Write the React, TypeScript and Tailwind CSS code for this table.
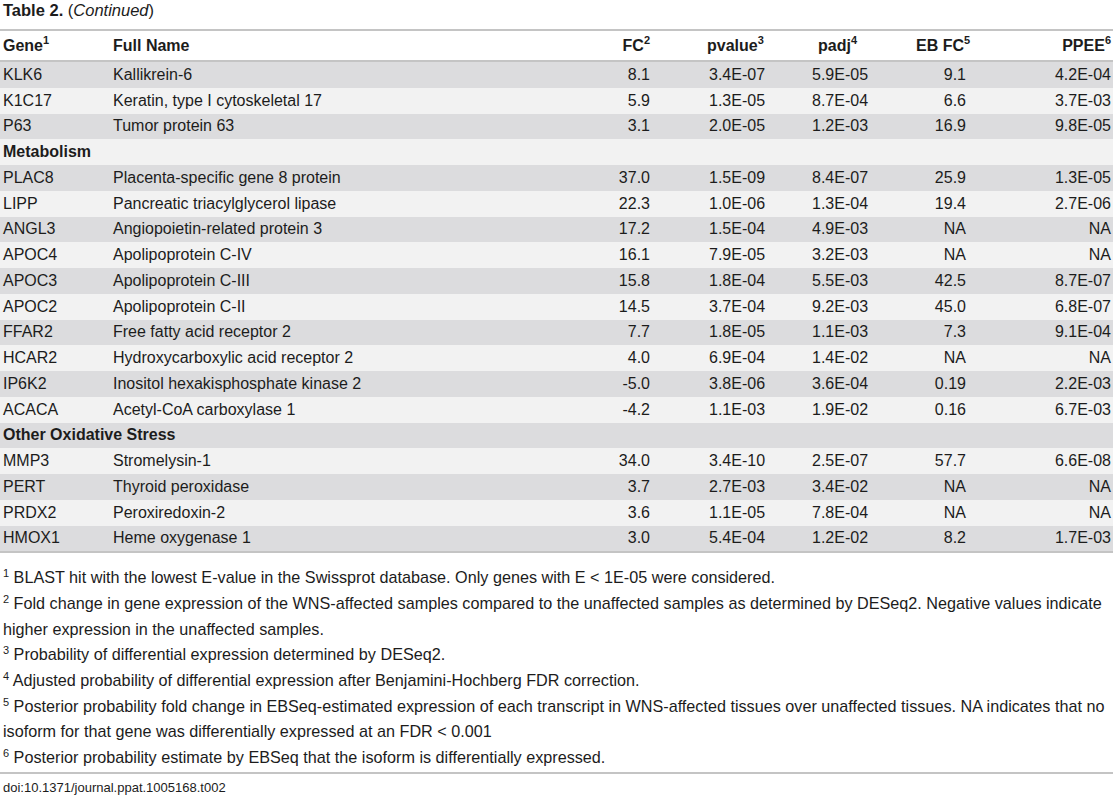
import React from "react";

type Row = { g?: string; n?: string; fc?: string; p?: string; pa?: string; eb?: string; pp?: string; section?: string };

const rows: Row[] = [
  { g: "KLK6", n: "Kallikrein-6", fc: "8.1", p: "3.4E-07", pa: "5.9E-05", eb: "9.1", pp: "4.2E-04" },
  { g: "K1C17", n: "Keratin, type I cytoskeletal 17", fc: "5.9", p: "1.3E-05", pa: "8.7E-04", eb: "6.6", pp: "3.7E-03" },
  { g: "P63", n: "Tumor protein 63", fc: "3.1", p: "2.0E-05", pa: "1.2E-03", eb: "16.9", pp: "9.8E-05" },
  { section: "Metabolism" },
  { g: "PLAC8", n: "Placenta-specific gene 8 protein", fc: "37.0", p: "1.5E-09", pa: "8.4E-07", eb: "25.9", pp: "1.3E-05" },
  { g: "LIPP", n: "Pancreatic triacylglycerol lipase", fc: "22.3", p: "1.0E-06", pa: "1.3E-04", eb: "19.4", pp: "2.7E-06" },
  { g: "ANGL3", n: "Angiopoietin-related protein 3", fc: "17.2", p: "1.5E-04", pa: "4.9E-03", eb: "NA", pp: "NA" },
  { g: "APOC4", n: "Apolipoprotein C-IV", fc: "16.1", p: "7.9E-05", pa: "3.2E-03", eb: "NA", pp: "NA" },
  { g: "APOC3", n: "Apolipoprotein C-III", fc: "15.8", p: "1.8E-04", pa: "5.5E-03", eb: "42.5", pp: "8.7E-07" },
  { g: "APOC2", n: "Apolipoprotein C-II", fc: "14.5", p: "3.7E-04", pa: "9.2E-03", eb: "45.0", pp: "6.8E-07" },
  { g: "FFAR2", n: "Free fatty acid receptor 2", fc: "7.7", p: "1.8E-05", pa: "1.1E-03", eb: "7.3", pp: "9.1E-04" },
  { g: "HCAR2", n: "Hydroxycarboxylic acid receptor 2", fc: "4.0", p: "6.9E-04", pa: "1.4E-02", eb: "NA", pp: "NA" },
  { g: "IP6K2", n: "Inositol hexakisphosphate kinase 2", fc: "-5.0", p: "3.8E-06", pa: "3.6E-04", eb: "0.19", pp: "2.2E-03" },
  { g: "ACACA", n: "Acetyl-CoA carboxylase 1", fc: "-4.2", p: "1.1E-03", pa: "1.9E-02", eb: "0.16", pp: "6.7E-03" },
  { section: "Other Oxidative Stress" },
  { g: "MMP3", n: "Stromelysin-1", fc: "34.0", p: "3.4E-10", pa: "2.5E-07", eb: "57.7", pp: "6.6E-08" },
  { g: "PERT", n: "Thyroid peroxidase", fc: "3.7", p: "2.7E-03", pa: "3.4E-02", eb: "NA", pp: "NA" },
  { g: "PRDX2", n: "Peroxiredoxin-2", fc: "3.6", p: "1.1E-05", pa: "7.8E-04", eb: "NA", pp: "NA" },
  { g: "HMOX1", n: "Heme oxygenase 1", fc: "3.0", p: "5.4E-04", pa: "1.2E-02", eb: "8.2", pp: "1.7E-03" },
];

const Sup = ({ children }: { children: React.ReactNode }) => (
  <sup className="text-[11px] top-[-0.55em]">{children}</sup>
);

export default function App() {
  return (
    <div
      className="w-[1113px] h-[800px] bg-white text-[#1c1c1c] overflow-hidden"
      style={{ fontFamily: '"Liberation Sans", Arial, sans-serif' }}
    >
      <div className="h-[29px] pl-[3px] text-[16.5px] leading-[20px]">
        <span className="font-bold">Table 2.</span> (<span className="italic">Continued</span>)
      </div>
      <div className="border-t-2 border-[#c4c4c4]" />
      <div className="flex h-[31px] items-center text-[16px] font-bold border-b-2 border-[#c4c4c4]">
        <div className="w-[113px] pl-[3px]">Gene<Sup>1</Sup></div>
        <div className="w-[477px]">Full Name</div>
        <div className="w-[60px] text-right">FC<Sup>2</Sup></div>
        <div className="w-[162px] pl-[57px]">pvalue<Sup>3</Sup></div>
        <div className="w-[104px] pl-[6px]">padj<Sup>4</Sup></div>
        <div className="w-[50px] text-right whitespace-nowrap">EB FC<Sup>5</Sup></div>
        <div className="w-[145px] text-right">PPEE<Sup>6</Sup></div>
      </div>
      <div className="text-[16px]">
        {rows.map((r, i) => (
          <div
            key={i}
            className={`flex h-[25.75px] items-center ${i % 2 === 0 ? "bg-[#dcdcde]" : "bg-[#f2f2f2]"}`}
          >
            {r.section ? (
              <div className="pl-[3px] font-bold">{r.section}</div>
            ) : (
              <>
                <div className="w-[113px] pl-[3px]">{r.g}</div>
                <div className="w-[477px]">{r.n}</div>
                <div className="w-[60px] text-right">{r.fc}</div>
                <div className="w-[162px] pl-[59px]">{r.p}</div>
                <div className="w-[104px]">{r.pa}</div>
                <div className="w-[50px] text-right">{r.eb}</div>
                <div className="w-[145px] text-right">{r.pp}</div>
              </>
            )}
          </div>
        ))}
      </div>
      <div className="border-t-2 border-[#c4c4c4]" />
      <div className="pt-[12px] pl-[3px] text-[16.2px] leading-[25.7px] whitespace-nowrap">
        <div><Sup>1</Sup> BLAST hit with the lowest E-value in the Swissprot database. Only genes with E &lt; 1E-05 were considered.</div>
        <div><Sup>2</Sup> Fold change in gene expression of the WNS-affected samples compared to the unaffected samples as determined by DESeq2. Negative values indicate</div>
        <div>higher expression in the unaffected samples.</div>
        <div><Sup>3</Sup> Probability of differential expression determined by DESeq2.</div>
        <div><Sup>4</Sup> Adjusted probability of differential expression after Benjamini-Hochberg FDR correction.</div>
        <div><Sup>5</Sup> Posterior probability fold change in EBSeq-estimated expression of each transcript in WNS-affected tissues over unaffected tissues. NA indicates that no</div>
        <div>isoform for that gene was differentially expressed at an FDR &lt; 0.001</div>
        <div><Sup>6</Sup> Posterior probability estimate by EBSeq that the isoform is differentially expressed.</div>
      </div>
      <div className="border-t-2 border-[#c4c4c4] mt-[1px]" />
      <div className="pl-[3px] pt-[5px] text-[13px] leading-[18px]">doi:10.1371/journal.ppat.1005168.t002</div>
    </div>
  );
}
